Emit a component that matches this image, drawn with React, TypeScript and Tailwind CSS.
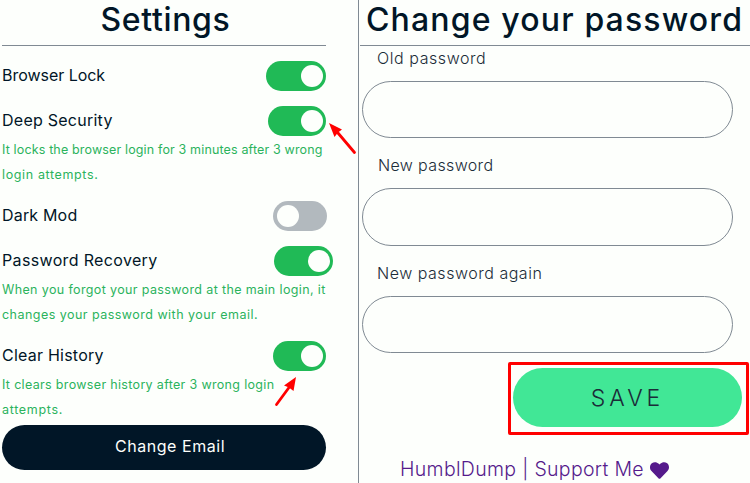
import React, { useState } from 'react';
import { FaHeart } from 'react-icons/fa';

type Setting = {
    name: string;
    note?: string[];
    on: boolean;
    labelClass: string;
    switchClass: string;
    noteClass?: string[];
};

const initialSettings: Setting[] = [
    { name: 'Browser Lock', on: true, labelClass: 'tracking-[-0.03px]', switchClass: 'w-[60px]' },
    {
        name: 'Deep Security',
        note: [ 'It locks the browser login for 3 minutes after 3 wrong', 'login attempts.' ],
        on: true,
        labelClass: 'tracking-[0.25px]',
        switchClass: 'w-[58px]',
        noteClass: [ 'tracking-[0.15px]', 'tracking-[0.63px]' ],
    },
    { name: 'Dark Mod', on: false, labelClass: 'tracking-[0.18px]', switchClass: 'w-[54px] -mr-px' },
    {
        name: 'Password Recovery',
        note: [ 'When you forgot your password at the main login, it', 'changes your password with your email.' ],
        on: true,
        labelClass: 'tracking-[0.35px]',
        switchClass: 'w-[59px] -mr-[7px]',
        noteClass: [ 'tracking-[0.37px]', 'tracking-[0.47px]' ],
    },
    {
        name: 'Clear History',
        note: [ 'It clears browser history after 3 wrong login', 'attempts.' ],
        on: true,
        labelClass: 'tracking-[0.23px]',
        switchClass: 'w-[53px]',
        noteClass: [ 'tracking-[0.33px]', 'tracking-[0.7px]' ],
    },
];

const fields = [
    { label: 'Old password', labelClass: 'ml-[17px] tracking-[0.57px]', inputClass: 'mt-[10px] h-[57px]' },
    { label: 'New password', labelClass: 'ml-[18px] mt-[15px] tracking-[0.36px]', inputClass: 'mt-[10px] h-[58px]' },
    { label: 'New password again', labelClass: 'ml-[17px] mt-[15px] tracking-[0.52px]', inputClass: 'mt-[10px] h-[57px]' },
];

const App: React.FC = () => {
    const [settings, setSettings] = useState<Setting[]>( initialSettings );

    const toggle = ( name: string ) => {
        setSettings( settings.map( ( item ) => item.name === name ? { ...item, on: !item.on } : item ) );
    };

    return (
        <div className="relative flex w-[750px] h-[483px] overflow-hidden bg-[#fdfffc] font-['Inter',sans-serif] text-[#011627]">
            <section className="w-[359px] shrink-0 border-r border-[#808a93] pl-[2px] pr-[32px]">
                <h1 className="h-[46px] border-b border-[#808a93] pt-px pl-[3px] text-center text-[32px] leading-[38px] font-medium tracking-[0.65px]">Settings</h1>
                {settings.map( ( item ) => (
                    <div key={item.name} className="mt-[15px]">
                        <div className="flex h-[30px] items-center justify-between">
                            <span className={`pb-[2px] whitespace-nowrap text-base ${ item.labelClass }`}>{item.name}</span>
                            <button
                                role="switch"
                                aria-checked={item.on}
                                aria-label={item.name}
                                onClick={() => toggle( item.name )}
                                className={`flex h-[30px] items-center rounded-full ${ item.switchClass } ${ item.on ? 'justify-end bg-[#20ba56] pr-[3px]' : 'justify-start bg-[#b2b9be] pl-1' }`}
                            >
                                <span className="size-[22px] rounded-full bg-[#fdfffc]"></span>
                            </button>
                        </div>
                        {item.note && (
                            <div className="pt-px -mb-px text-[12.5px] leading-[25px] text-[#2bb35c]">
                                {item.note.map( ( line, index ) => (
                                    <p key={line} className={`whitespace-nowrap ${ item.noteClass![index] }`}>{line}</p>
                                ) )}
                            </div>
                        )}
                    </div>
                ) )}
                <button className="mt-[4px] h-[45px] w-full rounded-full bg-[#011627] pl-[12px] pb-[3px] text-base tracking-[0.55px] text-[#fdfffc]">
                    Change Email
                </button>
            </section>

            <section className="flex flex-1 flex-col pl-px">
                <h1 className="h-[46px] shrink-0 border-b border-[#808a93] pt-px pl-[6px] text-[32px] leading-[38px] font-medium whitespace-nowrap tracking-[1.15px]">Change your password</h1>
                {fields.map( ( field ) => (
                    <label key={field.label} className="flex flex-col text-base leading-[25px] font-light text-[#1b2c38]">
                        <span className={`whitespace-nowrap ${ field.labelClass }`}>{field.label}</span>
                        <input type="password" className={`ml-[2px] w-[371px] rounded-full border border-[#808a93] px-6 outline-none ${ field.inputClass }`} />
                    </label>
                ) )}
                <div className="mt-[9px] mr-px flex h-[73px] w-[241px] shrink-0 self-end rounded-[2px] border-[3px] border-[#ff0000] pt-[3px] pl-[2px]">
                    <button className="h-[59px] w-[229px] rounded-full bg-[#41e796] pt-[2px] text-[23px] font-light tracking-[4px] text-[#1b2c38]">SAVE</button>
                </div>
                <a className="mt-[21px] ml-[40px] flex h-[28px] items-center text-[19.5px] font-light whitespace-nowrap tracking-[0.32px] text-[#551a8b]">
                    HumblDump | Support Me
                    <FaHeart className="ml-[6px] size-[19px]" />
                </a>
            </section>

            {/* arrows pointing at the switches */}
            <svg className="pointer-events-none absolute left-[328px] top-[122px]" width="30" height="34" viewBox="0 0 30 34">
                <path d="M26.5 30.5 10 11" stroke="#f00" strokeWidth="2.8" strokeLinecap="round" />
                <path d="M1 1 14 7.5 10 10.5 6.5 15Z" fill="#f00" />
            </svg>
            <svg className="pointer-events-none absolute left-[274px] top-[376px]" width="26" height="32" viewBox="0 0 26 32">
                <path d="M2.5 28.5 15 11.5" stroke="#f00" strokeWidth="2.8" strokeLinecap="round" />
                <path d="M22 1 19.5 15 15 11.5 10 9.5Z" fill="#f00" />
            </svg>
        </div>
    );
};

export default App;
